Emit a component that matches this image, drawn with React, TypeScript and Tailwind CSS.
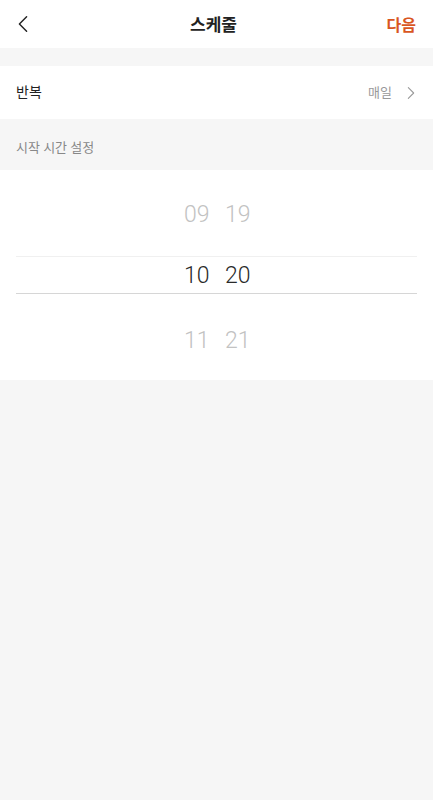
import React from 'react';

const Chevron: React.FC<{ dir: 'left' | 'right'; className?: string }> = ({ dir, className }) => (
  <svg viewBox="0 0 12 20" className={className} fill="none" stroke="currentColor" strokeWidth={1.6} strokeLinecap="round" strokeLinejoin="round">
    {dir === 'left' ? <path d="M10 2 L2 10 L10 18" /> : <path d="M2 2 L10 10 L2 18" />}
  </svg>
);

const PickerRow: React.FC<{ h: string; m: string; active?: boolean }> = ({ h, m, active }) => (
  <div className={`flex justify-center gap-[17px] text-[23px] font-light leading-none ${active ? 'text-[#2a2a2a]' : 'text-[#c2c2c2]'}`}>
    <span className="w-[24px] text-center">{h}</span>
    <span className="w-[24px] text-center">{m}</span>
  </div>
);

export default function App() {
  return (
    <div className="min-h-[800px] bg-[#f6f6f6] font-['Roboto','Noto_Sans_CJK_KR',sans-serif]">
      {/* header */}
      <div className="h-12 bg-white grid grid-cols-[1fr_auto_1fr] items-center px-4 pt-[3px]">
        <Chevron dir="left" className="w-[12px] h-[18px] text-[#222] ml-[1px] -mt-[3px]" />
        <h1 className="text-[17px] font-bold text-[#222] -ml-[6px]">스케줄</h1>
        <span className="justify-self-end text-[16px] font-bold text-[#d9561f] mr-[1px]">다음</span>
      </div>

      <div className="h-[18px]" />

      {/* repeat */}
      <div className="h-[53px] bg-white flex items-center justify-between pl-4 pr-[18px]">
        <span className="text-[14px] text-[#222]">반복</span>
        <div className="flex items-center gap-[15px] text-[#999]">
          <span className="text-[13px]">매일</span>
          <Chevron dir="right" className="w-[8px] h-[14px]" />
        </div>
      </div>

      <div className="h-[51px] flex items-center px-4 pt-[6px]">
        <span className="text-[13px] text-[#888]">시작 시간 설정</span>
      </div>

      {/* time picker */}
      <div className="bg-white">
        <div className="h-[86px] flex items-center justify-center pt-[3px]">
          <PickerRow h="09" m="19" />
        </div>
        <div className="h-[38px] mx-4 border-t border-[#f0f0f0] border-b border-b-[#d6d6d6] flex items-center justify-center pt-[1px]">
          <PickerRow h="10" m="20" active />
        </div>
        <div className="h-[86px] flex items-center justify-center pt-[6px]">
          <PickerRow h="11" m="21" />
        </div>
      </div>
    </div>
  );
}
